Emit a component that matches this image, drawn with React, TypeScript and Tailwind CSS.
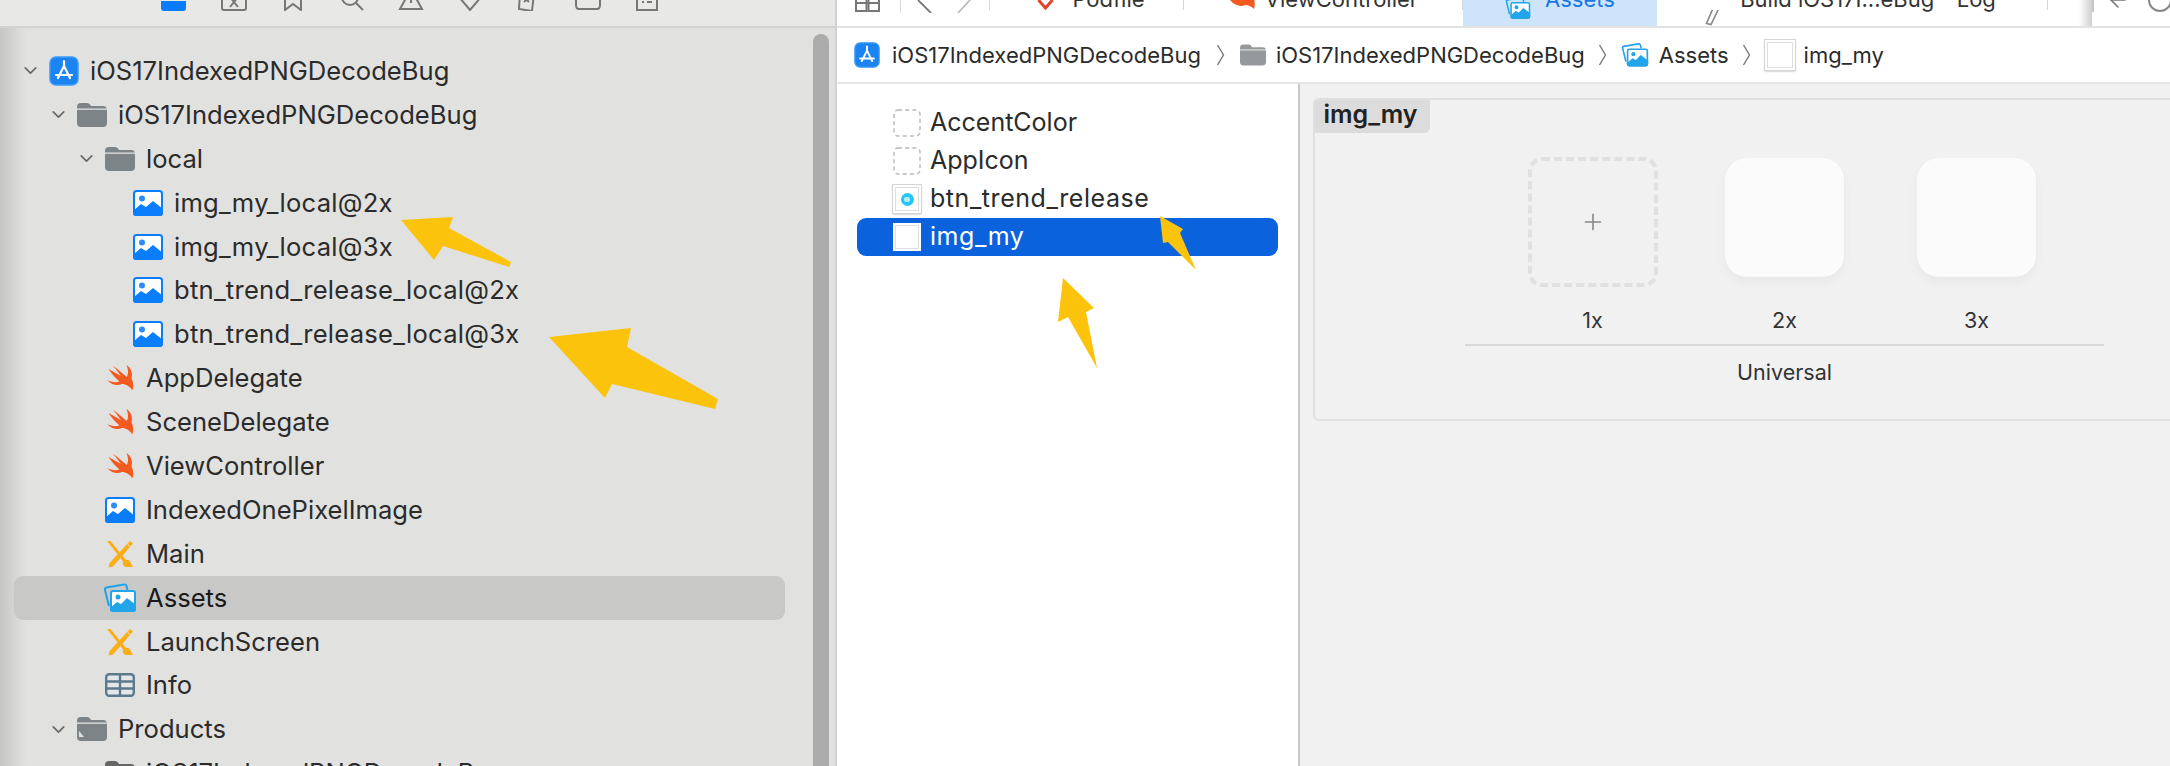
import { ChevronDown, ArrowLeft, Plus } from "lucide-react";
import type { ReactNode } from "react";

const FONT = "font-['Inter','Liberation_Sans',sans-serif]";

function AppProject({ size = 30 }: { size?: number }) {
  return (
    <svg width={size} height={size} viewBox="0 0 30 30" className="shrink-0">
      <rect x="1" y="1" width="28" height="28" rx="6" fill="#1c83f2" stroke="#3d9bf8" strokeWidth="1.5" />
      <path d="M15 5 V10 M15 10 L9 22 M15 10 L21 22 M7 19 H23" stroke="#fff" strokeWidth="2.2" strokeLinecap="round" fill="none" />
    </svg>
  );
}

function Folder({ color = "#7d8487", tag = false, w = 30, h = 24 }: { color?: string; tag?: boolean; w?: number; h?: number }) {
  return (
    <svg width={w} height={h} viewBox="0 0 30 24" className="shrink-0">
      <path d="M0 4 Q0 0 4 0 H10 Q12 0 13 1.5 L14 3 H26 Q30 3 30 7 V20 Q30 24 26 24 H4 Q0 24 0 20 Z" fill={color} />
      <rect x="0" y="5.5" width="30" height="1.3" fill="#e1e1df" />
      {tag && <path d="M2 14 L7 20 H2 Z" fill="#e1e1df" />}
    </svg>
  );
}

function ImageFile() {
  return (
    <svg width="30" height="26" viewBox="0 0 30 26" className="shrink-0">
      <rect width="30" height="26" rx="3.5" fill="#0a7dfb" />
      <rect x="2" y="2" width="26" height="22" rx="1.5" fill="#fff" />
      <circle cx="9" cy="8.5" r="3" fill="#2d8cf5" />
      <path d="M0 21 L8 14 L13 17 L20 11 L30 19 V22.5 Q30 26 26.5 26 H3.5 Q0 26 0 22.5 Z" fill="#0a7dfb" />
    </svg>
  );
}

function Swift({ size = 28 }: { size?: number }) {
  return (
    <svg width={size} height={size} viewBox="0 0 28 28" className="shrink-0">
      <path
        d="M1 16 C6 21.5 12 22 16 20 C20 20 24 22.5 26.5 26.5 C27.5 22 27.5 18 25.5 14.5 C27 9 25 4 20.5 1 C22.5 6 22.5 10 20.8 13 L7 1.5 L15 12 L2.5 5 C6 10.5 10 14.5 13.5 17.5 C9.5 18.8 5 18 1 16 Z"
        fill="#f4591f"
      />
    </svg>
  );
}

function Storyboard() {
  return (
    <svg width="30" height="28" viewBox="0 0 30 28" className="shrink-0">
      <path d="M2 1 L5.5 1 L21 20 L18.5 22 Z" fill="#fbae17" />
      <path d="M25 1 L28 3.5 L8 26.5 L3.5 27.5 L4.5 23 Z" fill="#fbae17" />
      <path d="M18.5 20.5 Q24 18 26 23 Q27 26.5 28.5 27 H20 Q16.5 25 18.5 20.5 Z" fill="#fbae17" />
      <path d="M22.5 4.5 L25.5 7" stroke="#e1e1df" strokeWidth="1" />
    </svg>
  );
}

function AssetsIcon({ w = 34, h = 30 }: { w?: number; h?: number }) {
  return (
    <svg width={w} height={h} viewBox="0 0 34 30" className="shrink-0">
      <path d="M6 23 L2 7 Q1.5 5 3.5 4.5 L21 1.5 Q23 1.2 23.5 3 L24.5 7" fill="none" stroke="#21a4ea" strokeWidth="2" />
      <rect x="7" y="7" width="26" height="22" rx="3" fill="#21a4ea" />
      <rect x="9" y="9" width="22" height="18" rx="1" fill="#ffffff" />
      <circle cx="15" cy="14" r="2.5" fill="#21a4ea" />
      <path d="M7 25 L14 19 L18 21 L24 15 L33 22 V26 Q33 29 30 29 H10 Q7 29 7 26 Z" fill="#21a4ea" />
    </svg>
  );
}

function Plist() {
  return (
    <svg width="30" height="24" viewBox="0 0 30 24" className="shrink-0">
      <rect x="1.2" y="1.2" width="27.6" height="21.6" rx="3" fill="#e4e7e8" stroke="#5c7a8e" strokeWidth="2.4" />
      <path d="M1 8.5 H29 M1 15.5 H29 M15 1 V23" stroke="#5c7a8e" strokeWidth="2.4" />
    </svg>
  );
}

function DashedIcon() {
  return (
    <svg width="28" height="28" viewBox="0 0 28 28" className="shrink-0">
      <rect x="1" y="1" width="26" height="26" rx="4" fill="none" stroke="#b8b8b8" strokeWidth="1.4" strokeDasharray="4 3.2" />
    </svg>
  );
}

function ThumbIcon({ dot = false, size = 28, shadow = true }: { dot?: boolean; size?: number; shadow?: boolean }) {
  return (
    <div
      style={{ width: size, height: size }}
      className={`flex shrink-0 items-center justify-center border-[2px] border-white bg-white ${shadow ? "outline outline-1 outline-[#d5d5d5] shadow-[0_1px_2px_rgba(0,0,0,0.4)]" : ""}`}
    >
      <div className="flex h-full w-full items-center justify-center border border-[#dedede]">
        {dot && (
          <div className="flex h-[13px] w-[13px] items-center justify-center rounded-full bg-[#27c5f7]">
            <div className="h-[5px] w-[6px] rounded-[2px] bg-[#b5ecfb]" />
          </div>
        )}
      </div>
    </div>
  );
}

type Row = { d: number; chevron?: boolean; icon: ReactNode; label: string; selected?: boolean };

const rows: Row[] = [
  { d: 0, chevron: true, icon: <AppProject />, label: "iOS17IndexedPNGDecodeBug" },
  { d: 1, chevron: true, icon: <Folder />, label: "iOS17IndexedPNGDecodeBug" },
  { d: 2, chevron: true, icon: <Folder />, label: "local" },
  { d: 3, icon: <ImageFile />, label: "img_my_local@2x" },
  { d: 3, icon: <ImageFile />, label: "img_my_local@3x" },
  { d: 3, icon: <ImageFile />, label: "btn_trend_release_local@2x" },
  { d: 3, icon: <ImageFile />, label: "btn_trend_release_local@3x" },
  { d: 2, icon: <Swift />, label: "AppDelegate" },
  { d: 2, icon: <Swift />, label: "SceneDelegate" },
  { d: 2, icon: <Swift />, label: "ViewController" },
  { d: 2, icon: <ImageFile />, label: "IndexedOnePixelImage" },
  { d: 2, icon: <Storyboard />, label: "Main" },
  { d: 2, icon: <AssetsIcon />, label: "Assets", selected: true },
  { d: 2, icon: <Storyboard />, label: "LaunchScreen" },
  { d: 2, icon: <Plist />, label: "Info" },
  { d: 1, chevron: true, icon: <Folder tag />, label: "Products" },
  { d: 2, icon: <Folder color="#666" />, label: "iOS17IndexedPNGDecodeBug" },
];

const indent = [20, 48, 76, 104];

function TreeRow({ row }: { row: Row }) {
  return (
    <div
      className={`flex h-[43.9px] shrink-0 items-center rounded-[9px] ${row.selected ? "bg-[#c8c8c6] text-[#1a1a1a]" : "text-[#2b2b2b]"}`}
    >
      <div className="flex shrink-0 items-center" style={{ marginLeft: indent[row.d] - 14 }}>
        <div className="flex w-[29px] shrink-0 items-center">
          {row.chevron && <ChevronDown size={21} strokeWidth={2} className="text-[#6a6a6a]" />}
        </div>
        <div className="flex w-[29px] shrink-0 items-center justify-center">{row.icon}</div>
      </div>
      <span className={`ml-[12px] whitespace-nowrap text-[25.6px] leading-[30px] ${row.label.includes("_") ? "tracking-[0.25px]" : ""}`}>
        {row.label}
      </span>
    </div>
  );
}

function ToolGlyph({ x }: { x: ReactNode }) {
  return (
    <svg width="26" height="20" viewBox="0 0 26 20" fill="none" stroke="#777" strokeWidth="2" className="shrink-0">
      {x}
    </svg>
  );
}

function NavStrip() {
  return (
    <div className="flex h-[11px] items-end overflow-hidden pl-[161px]">
      <div className="h-[10px] w-[25px] shrink-0 rounded-b-[3px] bg-[#0a7bfb]" />
      <div className="ml-[35px] flex items-end gap-[33px]">
        <ToolGlyph x={<><rect x="1" y="1" width="24" height="18" rx="2" /><path d="M9 6 L17 16 M17 6 L9 16" /></>} />
        <ToolGlyph x={<path d="M5 0 V19 L13 13 L21 19 V0" />} />
        <ToolGlyph x={<><circle cx="11" cy="6" r="8" /><path d="M17 12 L24 19" /></>} />
        <ToolGlyph x={<><path d="M13 -2 L24 18 H2 Z" /><path d="M13 6 V12" /></>} />
        <ToolGlyph x={<path d="M2 6 L13 19 L24 6" />} />
        <ToolGlyph x={<><path d="M4 2 L18 2 L16 20 L3 18 Z" /><path d="M8 6 L13 11 M13 6 L8 11 M21 6 L24 6" /></>} />
        <ToolGlyph x={<path d="M1 0 V14 Q1 18 4 18 H22 Q25 18 25 14 V0" />} />
        <ToolGlyph x={<><path d="M3 0 V19 H23 V0" /><path d="M8 11 H10 M13 11 H18" /></>} />
      </div>
    </div>
  );
}

function Tab({
  w,
  icon,
  label,
  active,
  gap = 14,
  pl = 0,
  pr = 0,
  divider = true,
}: {
  w: number;
  icon: ReactNode;
  label: string;
  active?: boolean;
  gap?: number;
  pl?: number;
  pr?: number;
  divider?: boolean;
}) {
  return (
    <div
      style={{ width: w, gap, paddingLeft: pl, paddingRight: pr }}
      className={`flex h-full shrink-0 items-end justify-center pb-[14px] ${active ? "bg-[#cde4fb] text-[#1878e8]" : "text-[#333]"} ${divider ? "relative" : ""}`}
    >
      {icon}
      <span className="whitespace-nowrap text-[22px] leading-[26px]">{label}</span>
      {divider && <div className="absolute right-0 top-0 h-[10px] w-[1px] bg-[#d6d6d6]" />}
    </div>
  );
}

function Crumb({ w = 36 }: { w?: number }) {
  return (
    <div style={{ width: w }} className="flex shrink-0 items-center justify-center">
      <svg width="9" height="22" viewBox="0 0 9 22" fill="none" stroke="#777" strokeWidth="1.4">
        <path d="M1.5 1 L7.5 11 L1.5 21" />
      </svg>
    </div>
  );
}

function Arrows() {
  return (
    <svg width="2170" height="766" viewBox="0 0 2170 766" className="pointer-events-none absolute left-0 top-0" fill="#fcc30d">
      <polygon points="401,220 453,217 449,228 511,262 509,267 443,246 434,260" />
      <polygon points="549,337 631,328 627,347 718,399 715,409 612,384 605,398" />
      <polygon points="1160,216 1183,229 1180,233 1196,270 1168,242 1163,243" />
      <polygon points="1063,278 1094,308 1086,312 1097,368 1068,317 1058,322" />
    </svg>
  );
}

export default function App() {
  return (
    <div className={`relative flex h-[766px] w-[2170px] overflow-hidden bg-white ${FONT}`}>
      {/* navigator */}
      <aside className="relative flex h-full w-[837px] shrink-0 flex-col overflow-hidden border-r-[2px] border-[#d2d2d0] bg-[#e1e1df]">
        <div className="h-[28px] shrink-0 border-b-[2px] border-[#d2d2d0] bg-[#e8e8e6]">
          <NavStrip />
        </div>
        <div className="flex flex-col pl-[14px] pr-[50px] pt-[21px]">
          {rows.map((r, i) => (
            <TreeRow key={i} row={r} />
          ))}
        </div>
        <div className="absolute bottom-0 left-0 top-[28px] w-[26px] bg-gradient-to-r from-[#c6c6c5] to-transparent" />
        <div className="absolute bottom-[-10px] right-[6px] top-[34px] w-[16px] rounded-t-full bg-[#acacac]" />
      </aside>

      {/* editor */}
      <main className="flex h-full min-w-0 flex-1 flex-col">
        <div className="flex h-[28px] shrink-0 overflow-hidden border-b-[2px] border-[#e2e2e2] bg-white">
          <div className="flex h-[12px] w-[63px] shrink-0 items-end justify-end pr-[20px]">
            <svg width="25" height="16" viewBox="0 0 25 16" fill="none" stroke="#777" strokeWidth="2">
              <rect x="1" y="1" width="10.5" height="14" />
              <rect x="13.5" y="1" width="10.5" height="14" />
              <path d="M1 7 H24" />
            </svg>
          </div>
          <div className="relative flex h-[13px] w-[90px] shrink-0 items-start gap-[24px] border-l border-[#d8d8d8] pl-[16px]">
            <svg width="16" height="13" viewBox="0 0 16 13" fill="none" stroke="#777" strokeWidth="1.8" className="shrink-0">
              <path d="M1 0 L14 13" />
            </svg>
            <svg width="14" height="13" viewBox="0 0 14 13" fill="none" stroke="#bbb" strokeWidth="1.8" className="shrink-0">
              <path d="M13 0 L1 13" />
            </svg>
            <div className="absolute right-0 top-0 h-[10px] w-[1px] bg-[#d8d8d8]" />
          </div>
          <Tab
            w={194}
            gap={18}
            pl={8}
            label="Podfile"
            icon={
              <svg width="17" height="10" viewBox="0 0 17 10" className="mb-[2px] shrink-0">
                <path d="M1.5 0 L8.5 8 L15.5 0" fill="none" stroke="#e4432b" strokeWidth="3" />
              </svg>
            }
          />
          <Tab
            w={279}
            gap={10}
            label="ViewController"
            icon={
              <svg width="26" height="10" viewBox="0 0 26 10" className="mb-[3px] shrink-0">
                <path d="M1 1 C6 7 12 8 16 6 C20 6 23 8 25 10 C26 6 26 3 25 0 H1 Z" fill="#f4591f" />
              </svg>
            }
          />
          <Tab w={194} active divider={false} label="Assets" icon={<span className="-mb-[8px]"><AssetsIcon w={26} h={24} /></span>} />
          <Tab
            w={391}
            gap={20}
            pr={4}
            label="Build iOS17I...eBug - Log"
            icon={
              <svg width="15" height="16" viewBox="0 0 15 16" fill="none" stroke="#888" strokeWidth="1.6" className="-mb-[14px] shrink-0">
                <path d="M9 -4 L14 -2 L6 14.5 L1.5 13.5 Z" />
              </svg>
            }
          />
          <div className="h-full w-[44px] shrink-0 bg-gradient-to-r from-white from-[70%] to-[#d0d0d0]" />
          <div className="flex h-[12px] flex-1 items-end border-l-[2px] border-[#c6c6c6] pl-[12px]">
            <ArrowLeft size={24} strokeWidth={1.6} className="shrink-0 text-[#777]" />
            <div className="ml-[18px] h-[24px] w-[24px] shrink-0 rounded-full border-[2px] border-[#888]" />
          </div>
        </div>

        <div className="flex h-[56px] shrink-0 items-center border-b-[2px] border-[#e6e6e6] bg-white pl-[17px] text-[22px] text-[#2b2b2b]">
          <AppProject size={26} />
          <span className="ml-[12px] whitespace-nowrap">iOS17IndexedPNGDecodeBug</span>
          <Crumb w={39} />
          <Folder color="#96999b" w={26} h={22} />
          <span className="ml-[10px] whitespace-nowrap">iOS17IndexedPNGDecodeBug</span>
          <Crumb />
          <AssetsIcon w={28} h={26} />
          <span className="ml-[10px] whitespace-nowrap">Assets</span>
          <Crumb />
          <ThumbIcon size={30} />
          <span className="ml-[9px] whitespace-nowrap">img_my</span>
        </div>

        <div className="flex min-h-0 flex-1">
          <div className="flex w-[461px] shrink-0 flex-col bg-white px-[20px] pt-[20px]">
            {[
              { l: "AccentColor", i: <DashedIcon /> },
              { l: "AppIcon", i: <DashedIcon /> },
              { l: "btn_trend_release", i: <ThumbIcon dot /> },
              { l: "img_my", i: <ThumbIcon shadow={false} />, s: true },
            ].map((it) => (
              <div
                key={it.l}
                className={`flex h-[38px] items-center gap-[9px] rounded-[9px] pl-[36px] text-[25px] ${it.l.includes("_") ? "tracking-[0.55px]" : ""} ${it.s ? "bg-[#0a63dc] text-white" : "text-[#2b2b2b]"}`}
              >
                {it.i}
                <span className="whitespace-nowrap">{it.l}</span>
              </div>
            ))}
          </div>
          <div className="flex-1 border-l-[2px] border-[#c9c9c9] bg-[#f1f1f1] pl-[13px] pt-[14px]">
            <div className="h-[323px] rounded-l-[6px] border-y-[2px] border-l-[2px] border-[#e0e0e0]">
              <div className="flex h-[33px] w-[115px] items-center justify-center rounded-br-[6px] bg-[#dcdcdc] pb-[5px] pr-[4px] text-[25px] font-semibold leading-[28px] text-[#222]">
                img_my
              </div>
              <div className="ml-[150px] mt-[24px] w-[639px]">
                <div className="mx-auto grid w-[576px] grid-cols-3 justify-items-center">
                  <div className="flex h-[130px] w-[130px] items-center justify-center rounded-[14px] border-[4px] border-dashed border-[#e0e0e0]">
                    <Plus size={26} strokeWidth={1.5} className="text-[#888]" />
                  </div>
                  <div className="mt-[1px] h-[119px] w-[119px] rounded-[22px] bg-[#fbfbfb] shadow-[0_6px_12px_rgba(0,0,0,0.04)]" />
                  <div className="mt-[1px] h-[119px] w-[119px] rounded-[22px] bg-[#fbfbfb] shadow-[0_6px_12px_rgba(0,0,0,0.04)]" />
                </div>
                <div className="mx-auto mt-[19px] grid w-[576px] grid-cols-3 text-center text-[21.5px] leading-[28px] text-[#333]">
                  <span>1x</span>
                  <span>2x</span>
                  <span>3x</span>
                </div>
                <div className="mt-[10px] h-[2px] bg-[#d8d8d8]" />
                <div className="mt-[12px] text-center text-[21.5px] leading-[28px] text-[#333]">Universal</div>
              </div>
            </div>
          </div>
        </div>
      </main>

      <Arrows />
    </div>
  );
}
